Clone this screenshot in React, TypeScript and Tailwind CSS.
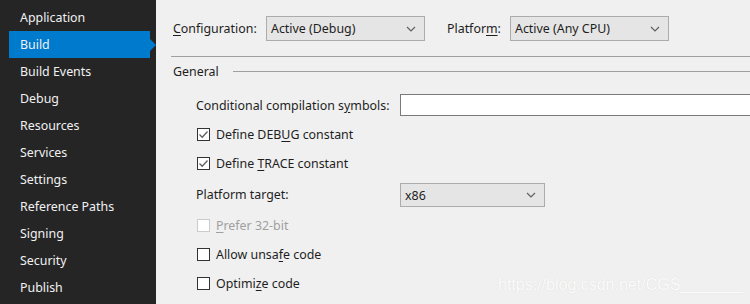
import { type ReactNode } from "react";

const navItems = [
  "Application",
  "Build",
  "Build Events",
  "Debug",
  "Resources",
  "Services",
  "Settings",
  "Reference Paths",
  "Signing",
  "Security",
  "Publish",
];

const Chevron = () => (
  <svg width="10" height="6" viewBox="0 0 10 6" className="shrink-0">
    <path d="M1 1 L5 5 L9 1" fill="none" stroke="#606060" strokeWidth="1.2" />
  </svg>
);

const Dropdown = ({ value, className }: { value: string; className: string }) => (
  <div
    className={`flex items-center justify-between border border-[#acacac] bg-[#e5e5e5] pl-[4px] pr-[8px] ${className}`}
  >
    <span className="translate-y-[1px]">{value}</span>
    <Chevron />
  </div>
);

const CheckBox = ({
  label,
  checked,
  disabled,
}: {
  label: ReactNode;
  checked?: boolean;
  disabled?: boolean;
}) => (
  <div className="flex h-[29px] items-center pl-[41px]">
    <div
      className={`flex h-[13px] w-[13px] items-center justify-center border bg-white ${
        disabled ? "border-[#cccccc]" : "border-[#333333]"
      }`}
    >
      {checked && (
        <svg width="11" height="11" viewBox="0 0 11 11">
          <path d="M1.5 5.5 L4.2 8.2 L9.5 2.5" fill="none" stroke="#606060" strokeWidth="1.3" />
        </svg>
      )}
    </div>
    <span className={`ml-[6px] translate-y-[1px] ${disabled ? "text-[#a0a0a0]" : "text-[#1e1e1e]"}`}>
      {label}
    </span>
  </div>
);

const App = () => {
  return (
    <div className="relative flex h-[304px] w-[750px] overflow-hidden font-['Noto_Sans',sans-serif] text-[12.4px] leading-none">
      <div className="w-[156px] shrink-0 bg-[#252526] pt-[4px]">
        {navItems.map((item) => (
          <div
            key={item}
            className={`relative ml-[9px] flex h-[27px] w-[141px] items-center pl-[11px] text-[#f1f1f1] ${
              item === "Build" ? "bg-[#007acc]" : ""
            }`}
          >
            <span className="translate-y-[1px]">{item}</span>
            {item === "Build" && (
              <div className="absolute right-[-6px] top-[8px] h-0 w-0 border-y-[6px] border-l-[6px] border-y-transparent border-l-[#007acc]" />
            )}
          </div>
        ))}
      </div>

      <div className="flex-1 bg-[#f0f0f0] text-[#1e1e1e]">
        <div className="flex items-center pl-[17px] pt-[16px]">
          <span className="w-[93px] translate-y-[1px]">
            <span className="underline underline-offset-2">C</span>onfiguration:
          </span>
          <Dropdown value="Active (Debug)" className="h-[25px] w-[159px]" />
          <span className="ml-[22px] w-[63px] translate-y-[1px]">
            Platfor<span className="underline underline-offset-2">m</span>:
          </span>
          <Dropdown value="Active (Any CPU)" className="h-[25px] w-[159px]" />
        </div>

        <div className="ml-[15px] mt-[15px] h-px bg-[#a0a0a0]" />

        <div className="mt-[5px] flex h-[18px] items-center pl-[17px]">
          <span className="translate-y-[1px]">General</span>
          <div className="ml-[14px] h-px flex-1 bg-[#a0a0a0]" />
        </div>

        <div className="mt-[14px] flex h-[22px] items-center pl-[40px]">
          <span className="w-[204px] translate-y-[1px]">
            Conditional compilation s<span className="underline underline-offset-2">y</span>mbols:
          </span>
          <div className="h-[22px] flex-1 border border-r-0 border-[#7a7a7a] bg-white" />
        </div>

        <div className="mt-[4px]">
          <CheckBox
            checked
            label={
              <>
                Define DEB<span className="underline underline-offset-2">U</span>G constant
              </>
            }
          />
          <CheckBox
            checked
            label={
              <>
                Define <span className="underline underline-offset-2">T</span>RACE constant
              </>
            }
          />
        </div>

        <div className="mt-[5px] flex h-[24px] items-center pl-[40px]">
          <span className="w-[204px]">Platform target:</span>
          <Dropdown value="x86" className="h-[24px] w-[145px]" />
        </div>

        <div className="mt-[4px]">
          <CheckBox
            disabled
            label={
              <>
                <span className="underline underline-offset-2">P</span>refer 32-bit
              </>
            }
          />
          <CheckBox
            label={
              <>
                Allow unsa<span className="underline underline-offset-2">f</span>e code
              </>
            }
          />
          <CheckBox
            label={
              <>
                Optimi<span className="underline underline-offset-2">z</span>e code
              </>
            }
          />
        </div>
      </div>

      <div className="pointer-events-none absolute left-[498px] top-[277px] font-['Liberation_Sans',sans-serif] text-[16px] text-[#fcfcfc] [text-shadow:0_0_1px_#d4d4d4]">
        https://blog.csdn.net/CGS_______
      </div>
    </div>
  );
};

export default App;
